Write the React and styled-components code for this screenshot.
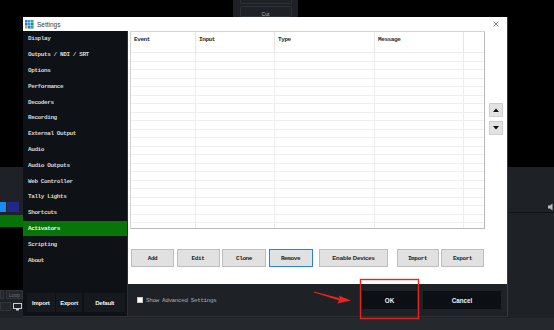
import React from "react";
import styled, { createGlobalStyle } from "styled-components";

const Global = createGlobalStyle`
  html, body { margin: 0; padding: 0; background: #000; }
  body { width: 554px; height: 330px; overflow: hidden; }
  * { box-sizing: border-box; }
`;

const MONO = `"Liberation Mono", "DejaVu Sans Mono", monospace`;
const SANS = `"Liberation Sans", Arial, sans-serif`;

const Screen = styled.div`
  position: relative;
  width: 554px;
  height: 330px;
  display: flex;
  flex-direction: column;
  background: #000;
  overflow: hidden;
`;

const TopArea = styled.div`
  height: 167px;
  background: #000;
  display: flex;
  padding-left: 233px;
`;

const CutPanel = styled.div`
  width: 65px;
  height: 17px;
  background: #1e2227;
  display: flex;
  flex-direction: column;
  align-items: center;
  gap: 2px;
  padding-top: 0;
`;

const CutSlot = styled.div`
  width: 52px;
  height: 4px;
  border: 1px solid #2d3238;
  border-top: none;
  border-radius: 0 0 2px 2px;
`;

const CutButton = styled.div`
  width: 52px;
  height: 11px;
  border: 1px solid #2d3238;
  border-radius: 2px;
  color: #b8bcc2;
  font: 5px ${SANS};
  display: flex;
  justify-content: center;
  padding-top: 4px;
`;

const LowerArea = styled.div`
  height: 151px;
  background: #1e2227;
  display: flex;
`;

const LeftDock = styled.div`
  width: 23px;
  display: flex;
  flex-direction: column;
  padding-top: 35px;
`;

const SwatchRow = styled.div`
  height: 10px;
  display: flex;
  gap: 1px;
`;

const Swatch = styled.div`
  width: ${(p) => p.w}px;
  background: ${(p) => p.c};
`;

const GreenBar = styled.div`
  margin-top: 3px;
  height: 12px;
  background: #067306;
`;

const Preview = styled.div`
  height: 63px;
  background: #000;
`;

const DockRow = styled.div`
  height: 9px;
  margin-top: ${(p) => p.mt || 0}px;
  display: flex;
  gap: 2px;
  align-items: center;
`;

const DockBox = styled.div`
  width: ${(p) => p.w}px;
  height: 9px;
  background: #23272c;
  border: 1px solid #30353b;
  color: #6e737a;
  font: 5px ${SANS};
  display: flex;
  align-items: center;
  justify-content: center;
`;

const Middle = styled.div`
  flex: 1;
`;

const RightDock = styled.div`
  width: 47px;
  display: flex;
  flex-direction: column;
`;

const RightStrip = styled.div`
  height: 46px;
  border-bottom: 1px solid #111316;
  display: flex;
  justify-content: flex-end;
  align-items: flex-end;
  padding-bottom: 1px;
`;

const StatusBand = styled.div`
  flex: 1;
  background: #25282c;
`;

/* ---------- Dialog ---------- */

const Dialog = styled.div`
  position: absolute;
  left: 23px;
  top: 17px;
  width: 485px;
  height: 300px;
  background: #1e2126;
  border-right: 1px solid #3a3e44;
  border-bottom: 1px solid #2e3237;
  display: flex;
  flex-direction: column;
`;

const TitleBar = styled.div`
  height: 14px;
  background: #fff;
  display: flex;
  align-items: center;
  padding: 0 2px;
  gap: 3px;
`;

const TitleText = styled.span`
  font: 6.5px ${SANS};
  color: #3a3a3a;
`;

const CloseBox = styled.div`
  margin-left: auto;
  margin-right: 6px;
  display: flex;
`;

const Body = styled.div`
  flex: 1;
  display: flex;
  min-height: 0;
`;

const Sidebar = styled.div`
  width: 105px;
  background: #0e1216;
  border-right: 1px solid #2a2f35;
  display: flex;
  flex-direction: column;
`;

const NavItem = styled.div`
  height: 15.8px;
  display: flex;
  align-items: center;
  padding-left: 5px;
  font: bold 6px ${MONO};
  letter-spacing: -0.4px;
  color: ${(p) => (p.active ? "#e8f5e8" : "#d4d6d8")};
  background: ${(p) => (p.active ? "#087508" : "transparent")};
  white-space: nowrap;
`;

const SideButtons = styled.div`
  margin-top: auto;
  display: flex;
  gap: 1px;
  padding: 0 2px 4px 4px;
`;

const DarkButton = styled.div`
  width: ${(p) => p.w}px;
  height: 19px;
  background: #161a1f;
  color: #f2f2f2;
  font: bold 6px ${SANS};
  letter-spacing: -0.2px;
  display: flex;
  align-items: center;
  justify-content: center;
  margin-left: ${(p) => p.ml || 0}px;
`;

const Main = styled.div`
  flex: 1;
  display: flex;
  flex-direction: column;
`;

const Content = styled.div`
  height: 253px;
  background: #fff;
  display: flex;
  flex-direction: column;
  padding-left: 2px;
`;

const TableRow = styled.div`
  display: flex;
`;

const Table = styled.div`
  width: 355px;
  height: 198px;
  border: 1px solid #d4d4d4;
  border-right-color: #b9b9b9;
  border-bottom-color: #b9b9b9;
  overflow: hidden;
  display: flex;
  flex-direction: column;
`;

const HeaderRow = styled.div`
  height: 21px;
  flex: none;
  display: flex;
  border-bottom: 1px solid #ececec;
`;

const HeaderCell = styled.div`
  width: ${(p) => p.w}px;
  flex: none;
  border-right: 1px solid #e6e6e6;
  padding: 4px 0 0 3px;
  font: bold 6px ${MONO};
  letter-spacing: -0.4px;
  color: #2a2a2a;
`;

const GridRow = styled.div`
  height: 8.5px;
  flex: none;
  display: flex;
  border-bottom: 1px solid #efefef;
`;

const GridCell = styled.div`
  width: ${(p) => p.w}px;
  flex: none;
  border-right: 1px solid #ececec;
`;

const ArrowColumn = styled.div`
  margin-left: 4px;
  padding-top: 72px;
  display: flex;
  flex-direction: column;
  gap: 4px;
`;

const ArrowButton = styled.div`
  width: 14px;
  height: 14px;
  background: #e3e3e3;
  border: 1px solid #cfcfcf;
  display: flex;
  align-items: center;
  justify-content: center;
`;

const ActionRow = styled.div`
  margin-top: 20px;
  padding-left: 1px;
  display: flex;
  gap: 2.5px;
`;

const ActionButton = styled.div`
  width: ${(p) => p.w}px;
  height: 18px;
  margin-left: ${(p) => p.ml || 0}px;
  background: #e1e1e1;
  border: 1px solid ${(p) => (p.focus ? "#2c7ed6" : "#bdbdbd")};
  box-shadow: ${(p) => (p.focus ? "inset 0 0 0 1px #d7e6f7" : "none")};
  display: flex;
  align-items: center;
  justify-content: center;
  font: ${(p) =>
    p.sans ? `bold 6px ${SANS}` : `bold 6px ${MONO}`};
  letter-spacing: ${(p) => (p.sans ? "-0.1px" : "-0.4px")};
  color: #1e1e1e;
  white-space: nowrap;
`;

const Footer = styled.div`
  flex: 1;
  display: flex;
  align-items: center;
  padding: 0 6px 0 9px;
`;

const CheckBox = styled.div`
  width: 6px;
  height: 6px;
  background: #fff;
  border: 1px solid #c8c8c8;
`;

const CheckLabel = styled.span`
  margin-left: 3px;
  font: 6px ${MONO};
  letter-spacing: -0.4px;
  color: #a9acb0;
`;

const FooterButton = styled.div`
  width: ${(p) => p.w}px;
  height: 18px;
  margin-left: ${(p) => (p.auto ? "auto" : `${p.ml || 0}px`)};
  background: #0c0f13;
  color: #f4f4f4;
  font: bold 6.3px ${SANS};
  display: flex;
  align-items: center;
  justify-content: center;
`;

const Annotation = styled.svg`
  position: absolute;
  left: 0;
  top: 0;
  pointer-events: none;
`;

const navItems = [
  "Display",
  "Outputs / NDI / SRT",
  "Options",
  "Performance",
  "Decoders",
  "Recording",
  "External Output",
  "Audio",
  "Audio Outputs",
  "Web Controller",
  "Tally Lights",
  "Shortcuts",
  "Activators",
  "Scripting",
  "About",
];

const columns = [
  { name: "Event", w: 65 },
  { name: "Input", w: 79 },
  { name: "Type", w: 100 },
  { name: "Message", w: 89 },
  { name: "", w: 22 },
];

function SettingsIcon() {
  const colors = [
    "#1e7fe0", "#2f9be8", "#3fae49",
    "#1e7fe0", "#2f9be8", "#1e7fe0",
    "#f39a1e", "#1e7fe0", "#3fae49",
  ];
  return (
    <svg width="9" height="9" viewBox="0 0 9 9">
      {colors.map((c, i) => (
        <rect key={i} x={(i % 3) * 3} y={Math.floor(i / 3) * 3} width="2.6" height="2.6" fill={c} />
      ))}
    </svg>
  );
}

function Triangle({ up }) {
  return (
    <svg width="6" height="4" viewBox="0 0 6 4">
      <path d={up ? "M0 4 L3 0.5 L6 4 Z" : "M0 0 L3 3.5 L6 0 Z"} fill="#111" />
    </svg>
  );
}

export default function App() {
  const rows = Array.from({ length: 22 });
  return (
    <>
      <Global />
      <Screen>
        <TopArea>
          <CutPanel>
            <CutSlot />
            <CutButton>Cut</CutButton>
          </CutPanel>
        </TopArea>
        <LowerArea>
          <LeftDock>
            <SwatchRow>
              <Swatch w={6} c="#1a8cf0" />
              <Swatch w={12} c="#22288a" />
            </SwatchRow>
            <GreenBar />
            <Preview />
            <DockRow>
              <DockBox w={4} />
              <DockBox w={17}>Loop</DockBox>
            </DockRow>
            <DockRow mt={3}>
              <DockBox w={11} />
              <svg width="9" height="8" viewBox="0 0 9 8">
                <rect x="0.5" y="0.5" width="8" height="5" fill="none" stroke="#c9ccd0" strokeWidth="1" />
                <rect x="3" y="6" width="3" height="1.5" fill="#c9ccd0" />
              </svg>
            </DockRow>
          </LeftDock>
          <Middle />
          <RightDock>
            <RightStrip>
              <svg width="6" height="8" viewBox="0 0 6 8">
                <path d="M0 2.5 H2 L4.5 0.5 V7.5 L2 5.5 H0 Z" fill="#b8bcc1" />
              </svg>
            </RightStrip>
          </RightDock>
        </LowerArea>
        <StatusBand />

        <Dialog>
          <TitleBar>
            <SettingsIcon />
            <TitleText>Settings</TitleText>
            <CloseBox>
              <svg width="6" height="6" viewBox="0 0 6 6">
                <path d="M0.5 0.5 L5.5 5.5 M5.5 0.5 L0.5 5.5" stroke="#777" strokeWidth="0.8" />
              </svg>
            </CloseBox>
          </TitleBar>
          <Body>
            <Sidebar>
              {navItems.map((n) => (
                <NavItem key={n} active={n === "Activators"}>
                  {n}
                </NavItem>
              ))}
              <SideButtons>
                <DarkButton w={28}>Import</DarkButton>
                <DarkButton w={27}>Export</DarkButton>
                <DarkButton w={41} ml={1}>Default</DarkButton>
              </SideButtons>
            </Sidebar>
            <Main>
              <Content>
                <TableRow>
                  <Table>
                    <HeaderRow>
                      {columns.map((c, i) => (
                        <HeaderCell key={i} w={c.w}>
                          {c.name}
                        </HeaderCell>
                      ))}
                    </HeaderRow>
                    {rows.map((_, r) => (
                      <GridRow key={r}>
                        {columns.map((c, i) => (
                          <GridCell key={i} w={c.w} />
                        ))}
                      </GridRow>
                    ))}
                  </Table>
                  <ArrowColumn>
                    <ArrowButton>
                      <Triangle up />
                    </ArrowButton>
                    <ArrowButton>
                      <Triangle />
                    </ArrowButton>
                  </ArrowColumn>
                </TableRow>
                <ActionRow>
                  <ActionButton w={43}>Add</ActionButton>
                  <ActionButton w={43}>Edit</ActionButton>
                  <ActionButton w={44}>Clone</ActionButton>
                  <ActionButton w={44} focus>
                    Remove
                  </ActionButton>
                  <ActionButton w={69} ml={4} sans>
                    Enable Devices
                  </ActionButton>
                  <ActionButton w={42} ml={6}>
                    Import
                  </ActionButton>
                  <ActionButton w={43}>Export</ActionButton>
                </ActionRow>
              </Content>
              <Footer>
                <CheckBox />
                <CheckLabel>Show Advanced Settings</CheckLabel>
                <FooterButton w={55} auto>
                  OK
                </FooterButton>
                <FooterButton w={78} ml={6}>
                  Cancel
                </FooterButton>
              </Footer>
            </Main>
          </Body>
        </Dialog>

        <Annotation width="554" height="330" viewBox="0 0 554 330">
          <rect x="360.5" y="279.5" width="58" height="39" fill="none" stroke="#e5261e" strokeWidth="1.4" />
          <path
            d="M314 291.6 L340 298.2 L338.6 295.4 L351 300.6 L337.2 303.6 L339.2 300.4 L314 292.6 Z"
            fill="#e5261e"
          />
        </Annotation>
      </Screen>
    </>
  );
}
